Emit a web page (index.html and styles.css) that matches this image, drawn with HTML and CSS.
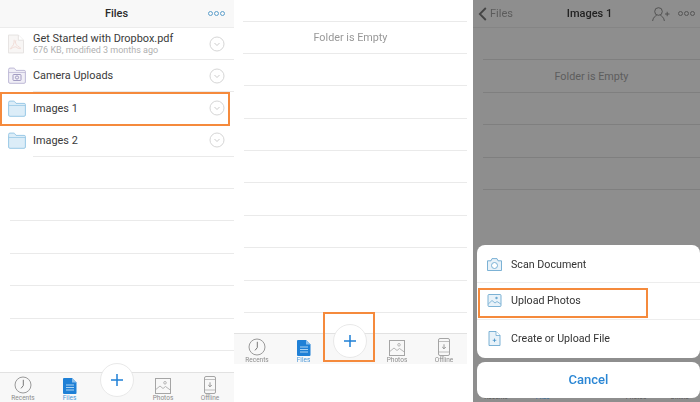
FILE: index.html
```html
<!DOCTYPE html>
<html lang="en">
<head>
<meta charset="utf-8">
<title>Dropbox upload steps</title>
<link rel="stylesheet" href="styles.css">
</head>
<body>
<svg class="defs" width="0" height="0" aria-hidden="true">
  <defs>
    <symbol id="folder" viewBox="0 0 18 17"><path d="M.6 3.2V15a1.3 1.3 0 0 0 1.3 1.3h14.200a1.3 1.3 0 0 0 1.3-1.3V4.600a1.2 1.2 0 0 0-1.2-1.2H8L6.600 1.500a1 1 0 0 0-.8-.4H2A1.400 1.400 0 0 0 .6 2.500z" fill="#dcedf8" stroke="#8fc3e3" stroke-width=".9"/><path d="M.8 5.500h16.400" stroke="#8fc3e3" stroke-width=".7" fill="none"/></symbol>
    <symbol id="chev" viewBox="0 0 16 16"><circle cx="8" cy="8" r="7" fill="none" stroke="#d6d6d6" stroke-width="1"/><path d="M5.500 7l2.500 2.500L10.500 7" fill="none" stroke="#c4c4c4" stroke-width=".9"/></symbol>
    <symbol id="t-recents" viewBox="0 0 18 18"><circle cx="9" cy="9" r="8" fill="none" stroke="#9a9a9a" stroke-width="1"/><path d="M9.300 3.800V9.600L7 12.400" fill="none" stroke="#777" stroke-width="1"/></symbol>
    <symbol id="t-files" viewBox="0 0 14 16"><path d="M1 0h8l4.500 4.500V15a1 1 0 0 1-1 1H1a1 1 0 0 1-1-1V1a1 1 0 0 1 1-1z" fill="#1f80d6"/><path d="M9 0v4.500h4.500" fill="#8dc0ec"/><path d="M3 7h8M3 9.500h8M3 12h8" stroke="#bcdcf6" stroke-width=".9"/></symbol>
    <symbol id="t-photos" viewBox="0 0 16 16"><rect x=".5" y=".5" width="15" height="15" fill="none" stroke="#a5a5a5" stroke-width="1"/><circle cx="10" cy="4.800" r="1.300" fill="none" stroke="#a5a5a5" stroke-width=".8"/><path d="M.8 11.500L5 8l3 2.500 2.500-2 4.800 3.500" fill="none" stroke="#a5a5a5" stroke-width=".8"/></symbol>
    <symbol id="t-offline" viewBox="0 0 12 18"><rect x=".5" y=".5" width="11" height="17" rx="1.500" fill="none" stroke="#a5a5a5" stroke-width="1"/><path d="M.8 3.500h10.400M.8 14h10.400" stroke="#a5a5a5" stroke-width=".7"/><path d="M6 6.300v4.400M4.200 9l1.800 1.800L7.800 9" fill="none" stroke="#808080" stroke-width=".8"/></symbol>
  </defs>
</svg>

<main class="screens">
  <section class="phone phone-files">
    <header class="navbar">
      <span class="nav-side"></span>
      <h1 class="nav-title">Files</h1>
      <span class="nav-side nav-more"><i class="dot"></i><i class="dot"></i><i class="dot"></i></span>
    </header>
    <div class="list">
      <div class="row row-file">
        <svg class="row-icon" width="16" height="20" viewBox="0 0 17 20"><path d="M.5 .5h10.500l5.500 5.500v13.500H.5z" fill="#f8f6f5" stroke="#e4e1e0"/><path d="M11 .5v5.500h5.500" fill="#fff" stroke="#e4e1e0"/><path d="M8.500 6c-1.500 3 .5 5 2 6.500 1 1 2.500 1 3 2-1 1-3.500 0-5-1.500-1.500 0-3.500.5-5 2-1 1-1.500-.5-.5-1 2.500-1.500 4-5 3.500-8.500" fill="none" stroke="#efd5cf" stroke-width=".9"/></svg>
        <div class="row-text">
          <span class="row-name">Get Started with Dropbox.pdf</span>
          <span class="row-sub">676 KB, modified 3 months ago</span>
        </div>
        <svg class="chev"><use href="#chev"/></svg>
      </div>
      <div class="row">
        <svg class="row-icon" width="18" height="17" viewBox="0 0 18 17"><path d="M.6 3.200V15a1.300 1.300 0 0 0 1.300 1.300h14.200a1.300 1.300 0 0 0 1.300-1.300V4.600a1.200 1.200 0 0 0-1.200-1.200H8L6.600 1.500a1 1 0 0 0-.8-.4H2A1.400 1.400 0 0 0 .6 2.500z" fill="#f1eff7" stroke="#b7b1d1" stroke-width=".9"/><path d="M.8 5.500h16.400" stroke="#b7b1d1" stroke-width=".7"/><rect x="5" y="7.500" width="8" height="6" rx=".8" fill="none" stroke="#8f88b5" stroke-width=".8"/><circle cx="9" cy="10.500" r="1.600" fill="none" stroke="#8f88b5" stroke-width=".8"/></svg>
        <div class="row-text"><span class="row-name">Camera Uploads</span></div>
        <svg class="chev"><use href="#chev"/></svg>
      </div>
      <div class="row row-marked">
        <svg class="row-icon" width="18" height="17"><use href="#folder"/></svg>
        <div class="row-text"><span class="row-name">Images 1</span></div>
        <svg class="chev"><use href="#chev"/></svg>
      </div>
      <div class="row">
        <svg class="row-icon" width="18" height="17"><use href="#folder"/></svg>
        <div class="row-text"><span class="row-name">Images 2</span></div>
        <svg class="chev"><use href="#chev"/></svg>
      </div>
      <div class="blank"></div><div class="blank"></div><div class="blank"></div><div class="blank"></div><div class="blank"></div><div class="blank"></div>
    </div>
    <nav class="tabbar">
      <span class="tab"><svg width="18" height="18"><use href="#t-recents"/></svg><b>Recents</b></span>
      <span class="tab tab-on"><svg width="14" height="16"><use href="#t-files"/></svg><b>Files</b></span>
      <span class="tab-gap"></span>
      <span class="tab"><svg width="16" height="16"><use href="#t-photos"/></svg><b>Photos</b></span>
      <span class="tab"><svg width="12" height="18"><use href="#t-offline"/></svg><b>Offline</b></span>
      <span class="fab"><svg width="12" height="12" viewBox="0 0 12 12"><path d="M6 0v12M0 6h12" stroke="#1f80d6" stroke-width="1.500"/></svg></span>
    </nav>
  </section>

  <section class="phone phone-empty">
    <div class="empty-list">
      <div class="line-first"></div>
      <div class="blank blank-label">Folder is Empty</div>
      <div class="blank"></div><div class="blank"></div><div class="blank"></div><div class="blank"></div><div class="blank"></div><div class="blank"></div><div class="blank"></div><div class="blank"></div>
    </div>
    <nav class="tabbar tabbar-short">
      <span class="tab"><svg width="18" height="18"><use href="#t-recents"/></svg><b>Recents</b></span>
      <span class="tab tab-on"><svg width="14" height="16"><use href="#t-files"/></svg><b>Files</b></span>
      <span class="tab-gap"></span>
      <span class="tab"><svg width="16" height="16"><use href="#t-photos"/></svg><b>Photos</b></span>
      <span class="tab"><svg width="12" height="18"><use href="#t-offline"/></svg><b>Offline</b></span>
      <span class="fab"><svg width="12" height="12" viewBox="0 0 12 12"><path d="M6 0v12M0 6h12" stroke="#1f80d6" stroke-width="1.500"/></svg></span>
      <span class="fab-mark"></span>
    </nav>
  </section>

  <section class="phone phone-sheet">
    <header class="navbar navbar-dim">
      <span class="nav-back"><svg width="9" height="14" viewBox="0 0 9 14"><path d="M7.800 1L1.800 7l6 6" fill="none" stroke="#444" stroke-width="1.800"/></svg>Files</span>
      <h1 class="nav-title">Images 1</h1>
      <span class="nav-tools">
        <svg width="18" height="14" viewBox="0 0 18 14"><circle cx="6.500" cy="4.500" r="3.800" fill="none" stroke="#4d4d4d" stroke-width=".9"/><path d="M.6 14c.5-3.500 2.500-5 4-5.500M12.400 14c-.5-3.500-2.500-5-4-5.500M13 7h4.500M15.200 4.800v4.400" fill="none" stroke="#4d4d4d" stroke-width=".9"/></svg>
        <span class="nav-more nav-more-dim"><i class="dot"></i><i class="dot"></i><i class="dot"></i></span>
      </span>
    </header>
    <div class="dim-list">
      <div class="blank"></div>
      <div class="blank blank-label">Folder is Empty</div>
      <div class="blank"></div><div class="blank"></div><div class="blank"></div>
    </div>
    <div class="dim-tabs"><b>Recents</b><b class="dim-on">Files</b><b class="dim-after-gap">Photos</b><b>Offline</b></div>
    <div class="sheet-wrap">
      <div class="sheet">
        <div class="sheet-row">
          <svg width="15" height="13" viewBox="0 0 15 13"><path d="M.5 2.800h3.500L5 .6h5l1 2.200h3.500v9.700H.5z" fill="#e8f2f9" stroke="#6ea9d0" stroke-width=".9"/><circle cx="7.500" cy="7.500" r="3" fill="#fff" stroke="#6ea9d0" stroke-width=".9"/></svg>
          <span>Scan Document</span>
        </div>
        <div class="sheet-row sheet-marked">
          <svg width="14" height="13" viewBox="0 0 14 13"><rect x=".5" y=".5" width="13" height="12" rx="1" fill="#e8f2f9" stroke="#6ea9d0" stroke-width=".9"/><circle cx="9" cy="4" r="1.200" fill="#6ea9d0"/><path d="M.8 10L4.500 6.500 7.500 9l2-1.500 3.800 2.500" fill="none" stroke="#6ea9d0" stroke-width=".8"/></svg>
          <span>Upload Photos</span>
        </div>
        <div class="sheet-row">
          <svg width="12" height="15" viewBox="0 0 12 15"><path d="M.5 .5h7l4 4v10H.5z" fill="#e8f2f9" stroke="#6ea9d0" stroke-width=".9"/><path d="M7.500 .5v4h4" fill="#fff" stroke="#6ea9d0" stroke-width=".8"/><path d="M6 7.500v3.600M4.200 9.300h3.600" stroke="#3f8fc6" stroke-width=".8"/></svg>
          <span>Create or Upload File</span>
        </div>
      </div>
      <div class="sheet-cancel">Cancel</div>
    </div>
  </section>
</main>
</body>
</html>
```

FILE: styles.css
```css
*, *::before, *::after { box-sizing: border-box; }
html, body { margin: 0; padding: 0; }
body {
  width: 700px;
  height: 402px;
  overflow: hidden;
  background: #fff;
  color: #333;
  font-family: Roboto, "Liberation Sans", sans-serif;
}
.defs { position: absolute; }
.screens { display: flex; width: 700px; height: 402px; filter: blur(.35px); }
.phone { position: relative; height: 402px; flex: none; }
.phone-files { width: 234px; display: flex; flex-direction: column; }
.phone-empty { width: 239px; display: flex; flex-direction: column; }
.phone-sheet { width: 227px; background: #8e8e8e; display: flex; flex-direction: column; }

.navbar {
  height: 28px;
  flex: none;
  display: flex;
  align-items: center;
  justify-content: space-between;
  padding: 0 9px;
  background: #f8f8f8;
  border-bottom: 1px solid #ececec;
}
.nav-title { margin: 0; font-size: 11px; font-weight: 500; color: #2b2b2b; }
.nav-side { width: 16px; }
.nav-more { display: flex; gap: 1px; width: auto; }
.dot { width: 5px; height: 5px; border: 1px solid #5d9fcb; border-radius: 50%; }
.nav-more-dim .dot { border-color: #555; }

.list { flex: 1; display: flex; flex-direction: column; background: #fff; }
.row {
  position: relative;
  height: 32.400px;
  flex: none;
  display: grid;
  grid-template-columns: 25px 1fr 16px;
  align-items: center;
  padding: 0 9px 0 8px;
}
.row::after {
  content: "";
  position: absolute;
  left: 33px;
  right: 0;
  bottom: 0;
  height: 1px;
  background: #eaeaea;
}
.row-file { height: 31.500px; }
.row-marked::after { display: none; }
.row-marked::before {
  content: "";
  position: absolute;
  left: 0;
  right: 4px;
  top: 0;
  bottom: -1.500px;
  border: 2px solid #f58a3c;
}
.row-text { display: flex; flex-direction: column; min-width: 0; }
.row-name { font-size: 10.900px; line-height: 13px; color: #3a3a3a; }
.row-sub { font-size: 9px; line-height: 10px; color: #b0b0b0; }
.chev { width: 16px; height: 16px; }

.blank {
  height: 32.400px;
  flex: none;
  margin-left: 10px;
  border-bottom: 1px solid #eaeaea;
}
.tabbar {
  position: relative;
  height: 30px;
  flex: none;
  display: grid;
  grid-template-columns: 46px 47px 47px 46px 48px;
  background: #f8f8f8;
  border-top: 1px solid #e2e2e2;
}
.tab-gap { display: block; }
.tab {
  display: flex;
  flex-direction: column;
  align-items: center;
  justify-content: flex-end;
  gap: 1px;
}
.tab b { font-size: 6.500px; line-height: 7px; font-weight: 400; color: #8c8c8c; }
.tab-on b { color: #4a97d8; }
.fab {
  position: absolute;
  left: 100px;
  top: -10px;
  width: 34px;
  height: 34px;
  border-radius: 50%;
  background: #fff;
  border: 1px solid #e9e9e9;
  display: flex;
  align-items: center;
  justify-content: center;
}
.tabbar-short .fab { left: 99px; }

.empty-list { height: 333px; flex: none; width: 233px; }
.line-first { height: 21.500px; margin-left: 9px; border-bottom: 1px solid #eaeaea; }
.blank-label {
  display: flex;
  align-items: center;
  justify-content: center;
  margin-left: 9px;
  padding-right: 9px;
  font-size: 10.800px;
  color: #989898;
}
.tabbar-short { width: 233px; height: 31px; }
.fab-mark {
  position: absolute;
  left: 89px;
  top: -22px;
  width: 52px;
  height: 50px;
  border: 2px solid #f58a3c;
}

.navbar-dim { background: #8e8e8e; border-bottom-color: #858585; position: relative; }
.navbar-dim .nav-title { color: #222; position: absolute; left: 6px; right: 0; text-align: center; }
.nav-back { display: flex; align-items: center; gap: 3px; font-size: 11px; color: #5c5c5c; margin-left: -4px; }
.nav-tools { display: flex; align-items: center; gap: 8px; margin-right: -4px; }
.dim-list { height: 190px; flex: none; }
.dim-list .blank { border-bottom-color: #7f7f7f; }
.dim-list .blank-label { color: #5d5d5d; margin-left: 10px; padding-right: 0; }

.dim-tabs {
  margin-top: auto;
  height: 8px;
  display: grid;
  grid-template-columns: 46px 47px 47px 46px 41px;
  font-size: 6.500px;
  line-height: 7px;
  text-align: center;
  color: #555;
}
.dim-tabs b { font-weight: 400; }
.dim-tabs .dim-after-gap { grid-column: 4; }
.dim-on { color: #2f6a9c; }

.sheet-wrap {
  position: absolute;
  left: 4px;
  right: 0;
  top: 245px;
  display: flex;
  flex-direction: column;
  gap: 4px;
}
.sheet { background: #fff; border-radius: 8px; }
.sheet-row {
  position: relative;
  height: 37.600px;
  display: flex;
  align-items: center;
  gap: 9px;
  padding-left: 10px;
  font-size: 10.700px;
  color: #333;
  border-bottom: 1px solid #ededed;
}
.sheet-row:first-child { padding-top: 2px; }
.sheet-row:last-child { border-bottom: 0; }
.sheet-row svg { width: 15px; flex: none; }
.sheet-marked::after {
  content: "";
  position: absolute;
  left: 1px;
  top: 5px;
  width: 170px;
  height: 30px;
  border: 2px solid #f58a3c;
}
.sheet-cancel {
  height: 36px;
  background: #fff;
  border-radius: 8px;
  display: flex;
  align-items: center;
  justify-content: center;
  color: #2a86d4;
  font-size: 13px;
  font-weight: 500;
}
```
